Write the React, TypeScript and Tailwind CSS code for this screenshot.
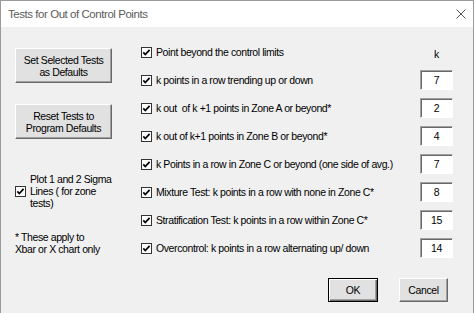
import React from "react";

type Test = { label: string; k?: string };

const tests: Test[] = [
  { label: "Point beyond the control limits" },
  { label: "k points in a row trending up or down", k: "7" },
  { label: "k out  of k +1 points in Zone A or beyond*", k: "2" },
  { label: "k out of k+1 points in Zone B or beyond*", k: "4" },
  { label: "k Points in a row in Zone C or beyond (one side of avg.)", k: "7" },
  { label: "Mixture Test: k points in a row with none in Zone C*", k: "8" },
  { label: "Stratification Test: k points in a row within Zone C*", k: "15" },
  { label: "Overcontrol: k points in a row alternating up/ down", k: "14" },
];

function CheckBox() {
  return (
    <svg width="11" height="11" viewBox="0 0 11 11" className="shrink-0">
      <rect x="0.5" y="0.5" width="10" height="10" fill="#fff" stroke="#333" />
      <path d="M2.3 5.4 L4.3 7.6 L8.6 2.9" fill="none" stroke="#000" strokeWidth="1.7" />
    </svg>
  );
}

function Button({ children, primary }: { children: React.ReactNode; primary?: boolean }) {
  return (
    <div
      className={
        primary
          ? "w-full h-full flex items-center justify-center border border-black bg-[#e1e1e1] shadow-[inset_1px_1px_0_#fff,inset_-1px_-1px_0_#696969,inset_-2px_-2px_0_#a0a0a0]"
          : "w-full h-full flex items-center justify-center border border-t-white border-l-white border-r-[#696969] border-b-[#696969] bg-[#e1e1e1] shadow-[inset_-1px_-1px_0_#a0a0a0]"
      }
    >
      {children}
    </div>
  );
}

export default function App() {
  return (
    <div className="w-[475px] h-[313px] bg-white text-[10.5px] leading-[12px] tracking-[-0.4px] text-black [font-family:'Liberation_Sans',Arial,sans-serif]">
      <div className="w-[474px] h-[313px] flex flex-col border border-b-0 border-[#9a9a9a] bg-[#f0f0f0]">
        {/* title bar */}
        <div className="h-[26px] bg-white flex items-center justify-between pl-[7px] pr-[7px]">
          <span className="text-[11.5px] tracking-[-0.45px] text-[#5c5c5c]">Tests for Out of Control Points</span>
          <svg width="10" height="10" viewBox="0 0 10 10">
            <path d="M0.5 0.5 L9.5 9.5 M9.5 0.5 L0.5 9.5" stroke="#555" strokeWidth="1" />
          </svg>
        </div>

        <div className="flex flex-1">
          {/* left column */}
          <div className="w-[140px] pl-[14px] flex flex-col">
            <div className="mt-[21px] w-[97px] h-[35px]">
              <Button>
                <div className="flex flex-col items-center justify-center text-center">
                  <span>Set Selected Tests</span>
                  <span>as Defaults</span>
                </div>
              </Button>
            </div>
            <div className="mt-[21px] w-[97px] h-[35px]">
              <Button>
                <div className="flex flex-col items-center justify-center text-center">
                  <span>Reset Tests to</span>
                  <span>Program Defaults</span>
                </div>
              </Button>
            </div>
            <div className="mt-[34px] flex items-center gap-[4px]">
              <CheckBox />
              <div className="flex flex-col">
                <span>Plot 1 and 2 Sigma</span>
                <span>Lines ( for zone</span>
                <span>tests)</span>
              </div>
            </div>
            <div className="mt-[22px] flex flex-col">
              <span>* These apply to</span>
              <span>Xbar or X chart only</span>
            </div>
          </div>

          {/* right column */}
          <div className="w-[312px] pt-[11px] flex flex-col">
            {tests.map((t, i) => (
              <div key={i} className="h-[28px] flex items-center">
                <CheckBox />
                <span className="ml-[4px] flex-1 whitespace-pre">{t.label}</span>
                {t.k ? (
                  <div className="w-[33px] h-[20px] flex items-center justify-center bg-white border border-t-[#a0a0a0] border-l-[#a0a0a0] border-r-white border-b-white shadow-[inset_1px_1px_0_#696969]">
                    {t.k}
                  </div>
                ) : (
                  <div className="w-[33px] pt-[4px] text-center">k</div>
                )}
              </div>
            ))}
            <div className="mt-[16px] pr-[5px] flex justify-end gap-[21px]">
              <div className="w-[50px] h-[24px]">
                <Button primary>
                  <span>OK</span>
                </Button>
              </div>
              <div className="w-[49px] h-[24px]">
                <Button>
                  <span>Cancel</span>
                </Button>
              </div>
            </div>
          </div>
        </div>
      </div>
    </div>
  );
}
